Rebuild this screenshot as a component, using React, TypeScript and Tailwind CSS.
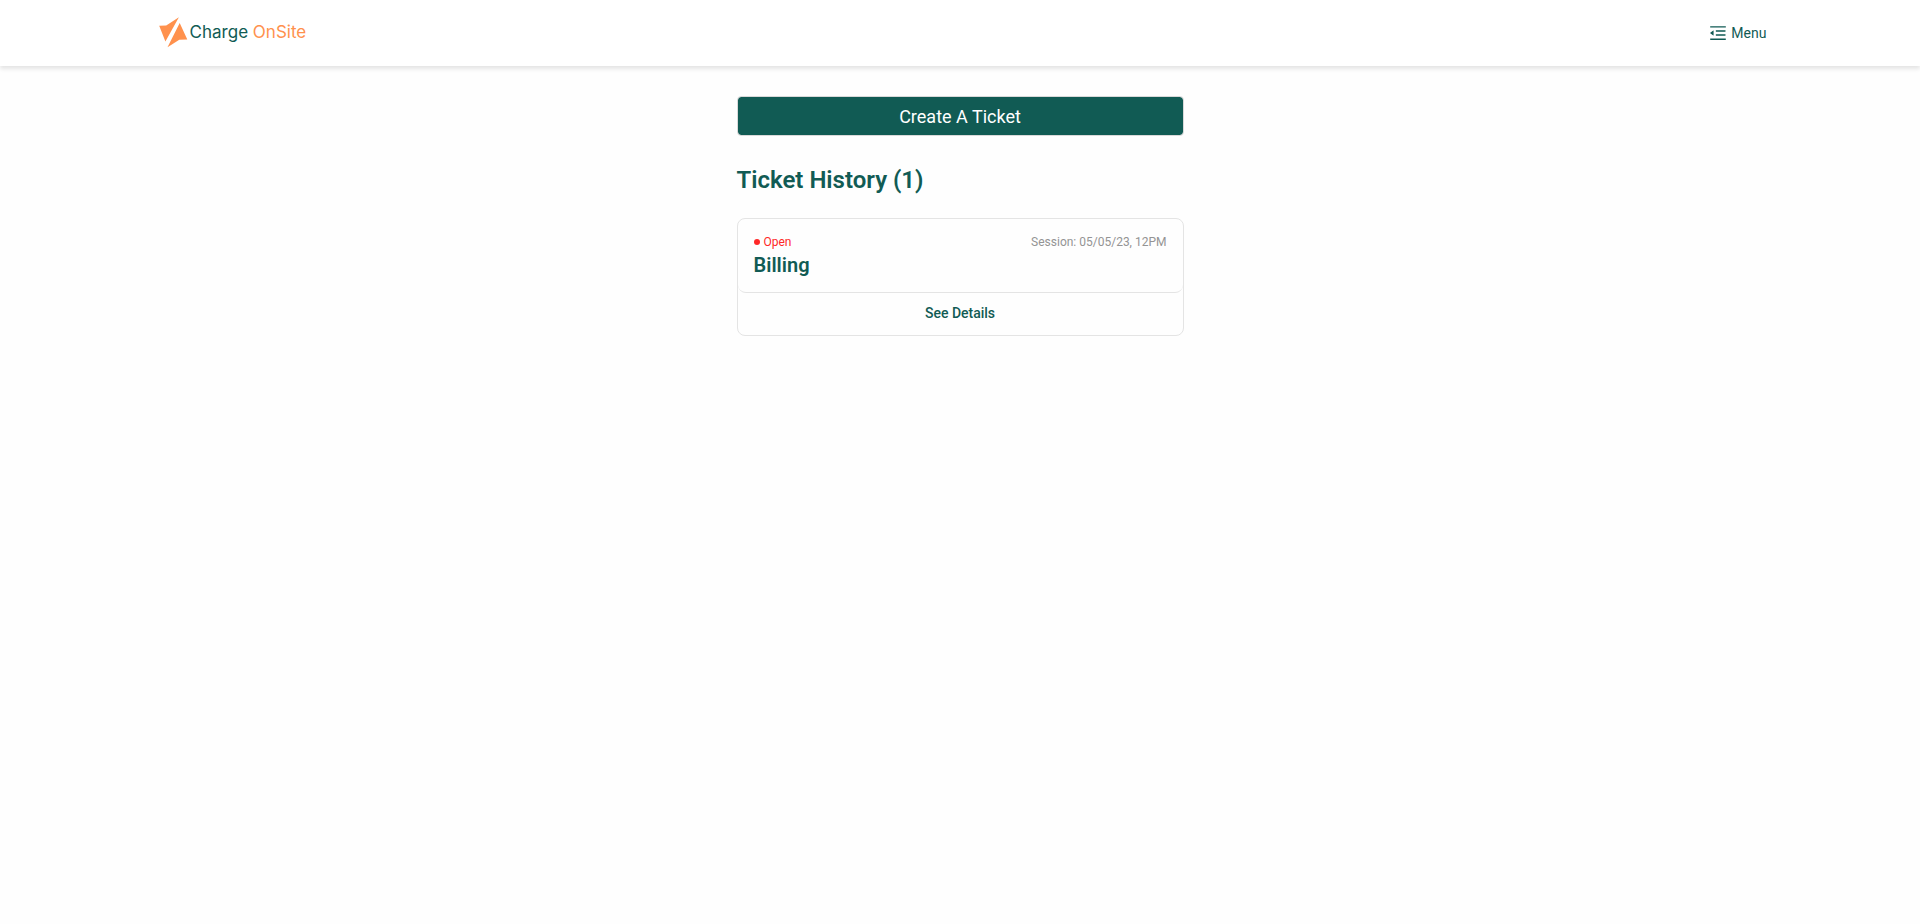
import React from "react";
import { AiOutlineMenuFold } from "react-icons/ai";

function Logo() {
  return (
    <a href="#" className="flex items-start gap-0.5 pl-1 font-['Inter',sans-serif] text-[17px] leading-[30px] text-[#115b54]">
      <svg width="30" height="32" viewBox="0 0 30 32" fill="#ff914d" aria-hidden="true">
        <path d="M1.2 8.8L8.2 8.5L20.9 0.3L7.4 24.6Z" />
        <path d="M21.7 6.1L29.3 22.4L21.3 22.7L9.5 30.2Z" />
      </svg>
      <span>
        Charge <span className="text-[#ff914d]">OnSite</span>
      </span>
    </a>
  );
}

function Header() {
  return (
    <header className="flex h-[66px] items-center justify-between bg-white px-[8%] shadow-[0_3px_4px_rgba(0,0,0,0.1)]">
      <Logo />
      <button type="button" className="flex items-center gap-[3px] text-sm text-[#115b54]">
        <AiOutlineMenuFold size={20} aria-hidden="true" />
        Menu
      </button>
    </header>
  );
}

function TicketCard() {
  return (
    <article className="mt-[22px] rounded-lg border border-[#e4e4e4]">
      <div className="rounded-lg border-b border-[#e4e4e4] px-4 pt-3 pb-[15px]">
        <div className="flex items-center justify-between text-xs leading-[22px]">
          <span className="flex items-center gap-1 text-[#ff2828]">
            <span className="size-1.5 rounded-full bg-[#ff2828]" />
            Open
          </span>
          <span className="text-[#949494]">Session: 05/05/23, 12PM</span>
        </div>
        <h2 className="text-xl leading-6 font-semibold">Billing</h2>
      </div>
      <button type="button" className="h-[42px] w-full pb-0.5 text-sm font-medium">
        See Details
      </button>
    </article>
  );
}

export default function App() {
  return (
    <div className="min-h-screen bg-[#fefefe] font-['Roboto',sans-serif] text-[#115b54]">
      <Header />
      <main className="mx-auto w-full max-w-[447px] pt-[30px]">
        <button
          type="button"
          className="h-10 w-full rounded border border-[#d9d9d9] bg-[#115b54] bg-clip-padding pt-0.5 text-lg text-white"
        >
          Create A Ticket
        </button>
        <h1 className="mt-7 text-2xl leading-8 font-semibold">Ticket History (1)</h1>
        <TicketCard />
      </main>
    </div>
  );
}
